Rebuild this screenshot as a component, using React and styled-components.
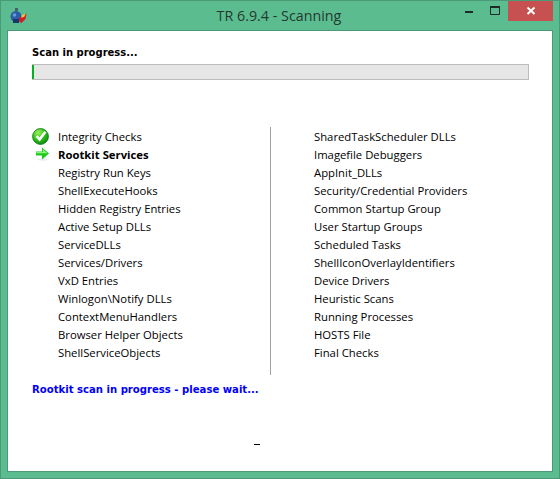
import styled, { createGlobalStyle } from 'styled-components'

const GlobalStyle = createGlobalStyle`
  html, body {
    margin: 0;
    padding: 0;
    background: #5bbd8f;
  }
  * {
    box-sizing: border-box;
  }
`

const Window = styled.div`
  width: 560px;
  height: 479px;
  display: flex;
  flex-direction: column;
  background: #5bbd8f;
  border: 1px solid #4a9a78;
  font-family: "Open Sans", "Noto Sans", sans-serif;
  overflow: hidden;
`

const TitleBar = styled.div`
  position: relative;
  height: 29px;
  flex: none;
  display: flex;
  align-items: center;
  justify-content: center;
`

const AppIcon = styled.svg`
  position: absolute;
  left: 9px;
  top: 7px;
  width: 17px;
  height: 16px;
`

const Title = styled.div`
  font-family: "Open Sans", "Noto Sans", sans-serif;
  font-size: 14.3px;
  color: #24392f;
  margin-left: -2px;
`

const Controls = styled.div`
  position: absolute;
  top: 0;
  right: 6px;
  display: flex;
  align-items: flex-start;
`

const ControlButton = styled.div`
  width: ${p => p.$wide ? 45 : 26}px;
  height: 20px;
  display: flex;
  align-items: center;
  justify-content: center;
  background: ${p => p.$wide ? '#c75050' : 'transparent'};
`

const Client = styled.div`
  flex: 1;
  margin: 0 6px 6px;
  background: #fff;
  border: 1px solid #4a9a78;
  padding: 14px 24px 0 24px;
  display: flex;
  flex-direction: column;
`

const Heading = styled.div`
  font-family: "DejaVu Sans", sans-serif;
  font-size: 10px;
  font-weight: 700;
  line-height: 14px;
  color: #000;
  height: 15px;
  padding-top: 1px;
`

const Progress = styled.div`
  margin-top: 4px;
  width: 497px;
  height: 16px;
  background: #e6e6e6;
  border: 1px solid #bcbcbc;
  border-left: none;
  flex: none;
`

const ProgressFill = styled.div`
  height: 100%;
  background: #06b025;
`

const Columns = styled.div`
  margin-top: 47px;
  height: 248px;
  display: flex;
`

const LeftColumn = styled.div`
  width: 238px;
`

const Divider = styled.div`
  width: 1px;
  background: #a0a0a0;
  flex: none;
`

const RightColumn = styled.div`
  margin-left: 43px;
`

const Row = styled.div`
  height: 18px;
  display: flex;
  align-items: center;
  font-family: "Open Sans", "Noto Sans", sans-serif;
  font-size: 11.3px;
  color: #000;
  white-space: nowrap;
  font-weight: ${p => p.$active ? 700 : 400};
`

const IconSlot = styled.div`
  width: 26px;
  height: 18px;
  flex: none;
  display: flex;
  align-items: center;
  justify-content: flex-start;
`

const Status = styled.div`
  margin-top: 8px;
  font-family: "DejaVu Sans", sans-serif;
  font-size: 10.1px;
  font-weight: 700;
  line-height: 14px;
  color: #0000ff;
`

const Cursor = styled.div`
  margin-top: 47px;
  margin-left: 222px;
  width: 6px;
  height: 1px;
  background: #000;
`

const leftItems = [
  'Integrity Checks',
  'Rootkit Services',
  'Registry Run Keys',
  'ShellExecuteHooks',
  'Hidden Registry Entries',
  'Active Setup DLLs',
  'ServiceDLLs',
  'Services/Drivers',
  'VxD Entries',
  'Winlogon\\Notify DLLs',
  'ContextMenuHandlers',
  'Browser Helper Objects',
  'ShellServiceObjects',
]

const rightItems = [
  'SharedTaskScheduler DLLs',
  'Imagefile Debuggers',
  'AppInit_DLLs',
  'Security/Credential Providers',
  'Common Startup Group',
  'User Startup Groups',
  'Scheduled Tasks',
  'ShellIconOverlayIdentifiers',
  'Device Drivers',
  'Heuristic Scans',
  'Running Processes',
  'HOSTS File',
  'Final Checks',
]

const CheckIcon = () => (
  <svg width="17" height="17" viewBox="0 0 17 17">
    <defs>
      <radialGradient id="okFill" cx="35%" cy="25%" r="85%">
        <stop offset="0%" stopColor="#9af05a" />
        <stop offset="55%" stopColor="#28c018" />
        <stop offset="100%" stopColor="#0c7d10" />
      </radialGradient>
    </defs>
    <circle cx="8.5" cy="8.5" r="7.9" fill="url(#okFill)" stroke="#127a18" strokeWidth="0.9" />
    <path d="M4.6 8.2 L7.6 11.6 L13.4 3.8" fill="none" stroke="#fff" strokeWidth="2.5" />
  </svg>
)

const ArrowIcon = () => (
  <svg width="20" height="16" viewBox="0 0 20 16">
    <ellipse cx="11" cy="13.5" rx="6" ry="1.2" fill="#ececec" />
    <path d="M4 5.5 H10 V1.5 L17 7.5 L10 13.5 V9.5 H4 Z" fill="#1fc81f" />
    <path d="M10.8 3.2 L15.4 7.2 H4.4 V6 H10.8 Z" fill="#8af578" />
  </svg>
)

const Logo = () => (
  <AppIcon viewBox="0 0 17 16">
    <rect x="5" y="0" width="3" height="3" fill="#45606e" />
    <circle cx="6" cy="8.5" r="5.5" fill="#2a5ca8" />
    <circle cx="4.5" cy="7" r="1.8" fill="#6a9ad6" />
    <rect x="3" y="11" width="6" height="4" fill="#1b3768" />
    <path d="M9 10 L16.5 5.5 L15.5 11 L11.5 15 L9.5 14 Z" fill="#d01f28" />
    <path d="M11.5 7.5 L15.5 5.5 L14.5 8.5 L11.5 10 Z" fill="#f4c92e" />
  </AppIcon>
)

const App = () => {
  return (
    <Window>
      <GlobalStyle />
      <TitleBar>
        <Logo />
        <Title>TR 6.9.4 - Scanning</Title>
        <Controls>
          <ControlButton>
            <svg width="10" height="10" viewBox="0 0 10 10">
              <rect x="1" y="5" width="8" height="2" fill="#1f2a26" />
            </svg>
          </ControlButton>
          <ControlButton>
            <svg width="10" height="10" viewBox="0 0 10 10">
              <path d="M0.5 1.5 H9.5 V8.5 H0.5 Z" fill="none" stroke="#1f2a26" />
              <rect x="0" y="0" width="10" height="2" fill="#1f2a26" />
            </svg>
          </ControlButton>
          <ControlButton $wide>
            <svg width="10" height="10" viewBox="0 0 10 10">
              <path d="M1.5 1.5 L8.5 8 M8.5 1.5 L1.5 8" stroke="#fff" strokeWidth="2" />
            </svg>
          </ControlButton>
        </Controls>
      </TitleBar>
      <Client>
        <Heading>Scan in progress...</Heading>
        <Progress>
          <ProgressFill style={{ width: '2px' }} />
        </Progress>
        <Columns>
          <LeftColumn>
            {leftItems.map((item, i) => (
              <Row key={item} $active={i === 1}>
                <IconSlot>
                  {i === 0 && <CheckIcon />}
                  {i === 1 && <ArrowIcon />}
                </IconSlot>
                {item}
              </Row>
            ))}
          </LeftColumn>
          <Divider />
          <RightColumn>
            {rightItems.map(item => (
              <Row key={item}>{item}</Row>
            ))}
          </RightColumn>
        </Columns>
        <Status>Rootkit scan in progress - please wait...</Status>
        <Cursor />
      </Client>
    </Window>
  )
}

export default App
